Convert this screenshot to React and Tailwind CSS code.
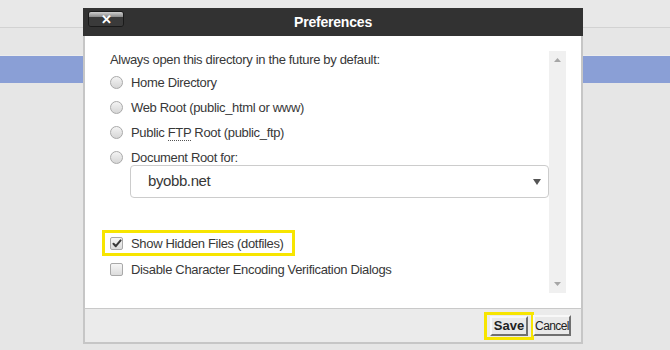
import React from "react";

const font = { fontFamily: '"Liberation Sans", Arial, sans-serif' };

function Radio() {
  return (
    <span className="inline-block w-[13px] h-[13px] rounded-full border border-[#a9a9a9] bg-gradient-to-b from-[#f4f4f4] to-[#d6d6d6] shrink-0" />
  );
}

function Checkbox({ checked }) {
  return (
    <span className="relative inline-flex items-center justify-center w-[13px] h-[13px] rounded-[2px] border border-[#a9a9a9] bg-gradient-to-b from-[#f6f6f6] to-[#dcdcdc] shrink-0">
      {checked && (
        <svg width="10" height="9" viewBox="0 0 10 9" className="absolute">
          <path d="M1.5 4.8 L3.8 7.2 L8.6 1.4" fill="none" stroke="#3a3a3a" strokeWidth="2" strokeLinecap="round" strokeLinejoin="round" />
        </svg>
      )}
    </span>
  );
}

function Row({ children, control, className = "" }) {
  return (
    <div className={`flex items-center h-[16px] ${className}`}>
      <div className="w-[10px] shrink-0" />
      {control}
      <span className="ml-[8px] text-[13px] tracking-[-0.33px] text-[#383838] leading-none whitespace-nowrap">
        {children}
      </span>
    </div>
  );
}

export default function App() {
  return (
    <div className="relative w-[670px] h-[350px] bg-[#e6e6e6] overflow-hidden" style={font}>
      {/* background page */}
      <div className="h-[27px] bg-[#e8e8e8]" />
      <div className="h-px bg-[#d2d2d2]" />
      <div className="h-[27px]" />
      <div className="h-px bg-[#ececec]" />
      <div className="h-[27px] bg-[#8a9fd6]" />

      {/* dialog */}
      <div className="absolute left-[83px] top-[8px] w-[500px] flex flex-col">
        <div className="relative h-[28px] bg-[#323232] flex items-center justify-center">
          <div className="absolute left-[5px] top-[3px] w-[36px] h-[16px] rounded-[3px] border border-[#1a1a1a] overflow-hidden flex flex-col">
            <div className="h-[5px] bg-gradient-to-b from-[#d0d0d0] to-[#8a8a8a]" />
            <div className="flex-1 bg-[#3a3a3a]" />
            <span className="absolute inset-0 flex items-center justify-center text-white text-[13px] font-bold leading-none">✕</span>
          </div>
          <span className="text-white text-[14px] font-bold tracking-[-0.2px]">Preferences</span>
        </div>

        <div className="h-[272px] bg-white border-x-2 border-[#c6c6c6] pt-[15px] pb-[15px] pl-[15px] pr-[15px] flex">
          <div className="flex-1 flex flex-col">
            <div className="h-[16px] flex items-center pl-[10px] text-[13px] tracking-[-0.33px] text-[#383838] leading-none whitespace-nowrap">
              Always open this directory in the future by default:
            </div>
            <Row control={<Radio />} className="mt-[7px]">Home Directory</Row>
            <Row control={<Radio />} className="mt-[9px]">Web Root (public_html or www)</Row>
            <Row control={<Radio />} className="mt-[9px]">
              Public <span className="border-b border-dotted border-[#555]">FTP</span> Root (public_ftp)
            </Row>
            <Row control={<Radio />} className="mt-[9px]">Document Root for:</Row>
            <div className="ml-[30px] mt-0 h-[33px] border border-[#cccccc] rounded-[4px] flex items-center justify-between pl-[17px] pr-[7px]">
              <span className="text-[15px] tracking-[-0.4px] text-[#383838]">byobb.net</span>
              <svg width="8" height="6" viewBox="0 0 8 6">
                <path d="M0 0 H8 L4 6 Z" fill="#555" />
              </svg>
            </div>
            <div className="mt-[32px] ml-[2px] w-fit h-[26px] border-[3px] border-[#f7e500] flex items-center pl-[5px] pr-[8px]">
              <Checkbox checked />
              <span className="ml-[8px] text-[13px] tracking-[-0.33px] text-[#383838] leading-none whitespace-nowrap">
                Show Hidden Files (dotfiles)
              </span>
            </div>
            <Row control={<Checkbox />} className="mt-[5px]">Disable Character Encoding Verification Dialogs</Row>
          </div>
          <div className="w-[17px] bg-[#f0f0f0] flex flex-col items-center justify-between py-[7px]">
            <svg width="7" height="4" viewBox="0 0 7 4"><path d="M0 4 L3.5 0 L7 4 Z" fill="#a6a6a6" /></svg>
            <svg width="7" height="4" viewBox="0 0 7 4"><path d="M0 0 L7 0 L3.5 4 Z" fill="#a6a6a6" /></svg>
          </div>
        </div>

        <div className="h-[36px] bg-[#ebebeb] border-t border-[#c9c9c9] border-x-2 border-b-2 border-x-[#c6c6c6] border-b-[#c6c6c6] flex items-center justify-end pr-[10px]">
          <div className="border-[3px] border-[#f7e500] p-[3px] h-[28px] flex items-center">
            <button className="w-[38px] h-[20px] bg-[#e9e9e9] border-2 border-t-[#f8f8f8] border-l-[#f8f8f8] border-r-[#707070] border-b-[#707070] text-[13px] font-bold text-[#222] leading-none flex items-center justify-center">
              Save
            </button>
          </div>
          <button className="ml-[-1px] w-[38px] h-[21px] p-0 bg-[#e9e9e9] border-2 border-t-[#f8f8f8] border-l-[#f8f8f8] border-r-[#707070] border-b-[#707070] text-[12px] tracking-[-0.6px] text-[#222] leading-none flex items-center justify-center overflow-visible whitespace-nowrap">
            Cancel
          </button>
        </div>
      </div>
    </div>
  );
}
